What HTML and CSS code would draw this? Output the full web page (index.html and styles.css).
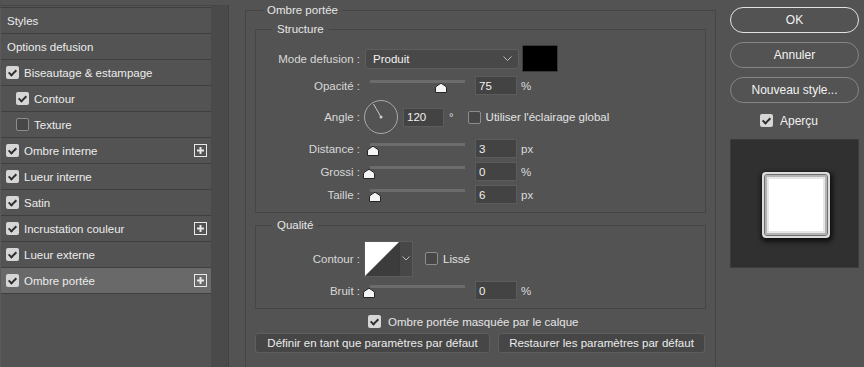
FILE: index.html
```html
<!DOCTYPE html>
<html lang="fr">
<head>
    <meta charset="UTF-8">
    <title>Style de calque</title>
    <link rel="stylesheet" href="styles.css">
</head>
<body>
    <div class="side">
        <ul class="list">
            <li class="item plain">Styles</li>
            <li class="item plain">Options defusion</li>
            <li class="item"><span class="cb on"></span>Biseautage &amp; estampage</li>
            <li class="item sub"><span class="cb on"></span>Contour</li>
            <li class="item sub"><span class="cb"></span>Texture</li>
            <li class="item"><span class="cb on"></span>Ombre interne
                <svg class="add" width="13" height="13"><rect x=".5" y=".5" width="12" height="12" fill="none" stroke="#e8e8e8"/><path d="M6.5 3v7M3 6.5h7" stroke="#e8e8e8" stroke-width="2"/></svg>
            </li>
            <li class="item"><span class="cb on"></span>Lueur interne</li>
            <li class="item"><span class="cb on"></span>Satin</li>
            <li class="item"><span class="cb on"></span>Incrustation couleur
                <svg class="add" width="13" height="13"><rect x=".5" y=".5" width="12" height="12" fill="none" stroke="#e8e8e8"/><path d="M6.5 3v7M3 6.5h7" stroke="#e8e8e8" stroke-width="2"/></svg>
            </li>
            <li class="item"><span class="cb on"></span>Lueur externe</li>
            <li class="item active"><span class="cb on"></span>Ombre portée
                <svg class="add" width="13" height="13"><rect x=".5" y=".5" width="12" height="12" fill="none" stroke="#e8e8e8"/><path d="M6.5 3v7M3 6.5h7" stroke="#e8e8e8" stroke-width="2"/></svg>
            </li>
        </ul>
        <div class="track"></div>
    </div>

    <div class="main">
        <fieldset class="box outer">
            <legend>Ombre portée</legend>

            <fieldset class="box structure">
                <legend>Structure</legend>
                <div class="row mode">
                    <span class="lbl">Mode defusion :</span>
                    <div class="select">Produit
                        <svg width="9" height="6"><path d="M.5 .5l4 4 4-4" fill="none" stroke="#bdbdbd"/></svg>
                    </div>
                    <div class="swatch"></div>
                </div>
                <div class="row">
                    <span class="lbl">Opacité :</span>
                    <div class="slider">
                        <svg class="thumb" style="left: 76px" width="12" height="10"><path d="M.5 9.5V5Q.5 4 1.5 3.2L5 .8Q6 0 7 .8L10.5 3.2Q11.5 4 11.5 5V9.5Z" fill="#f4f4f4" stroke="#262626"/></svg>
                    </div>
                    <input class="num" value="75"><span class="unit">%</span>
                </div>
                <div class="row angle">
                    <span class="lbl">Angle :</span>
                    <svg class="dial" width="34" height="34">
                        <circle cx="17" cy="17" r="16.5" fill="none" stroke="#a9a9a9"/>
                        <path d="M17 17L9.5 4" stroke="#c8c8c8"/>
                        <circle cx="17" cy="17" r="1.5" fill="#d0d0d0"/>
                    </svg>
                    <input class="num" value="120"><span class="unit deg">°</span>
                    <span class="cb global"></span><span class="opt">Utiliser l'éclairage global</span>
                </div>
                <div class="row gap5">
                    <span class="lbl">Distance :</span>
                    <div class="slider">
                        <svg class="thumb" style="left: 8px" width="12" height="10"><path d="M.5 9.5V5Q.5 4 1.5 3.2L5 .8Q6 0 7 .8L10.5 3.2Q11.5 4 11.5 5V9.5Z" fill="#f4f4f4" stroke="#262626"/></svg>
                    </div>
                    <input class="num" value="3"><span class="unit">px</span>
                </div>
                <div class="row">
                    <span class="lbl">Grossi :</span>
                    <div class="slider">
                        <svg class="thumb" style="left: 4px" width="12" height="10"><path d="M.5 9.5V5Q.5 4 1.5 3.2L5 .8Q6 0 7 .8L10.5 3.2Q11.5 4 11.5 5V9.5Z" fill="#f4f4f4" stroke="#262626"/></svg>
                    </div>
                    <input class="num" value="0"><span class="unit">%</span>
                </div>
                <div class="row">
                    <span class="lbl">Taille :</span>
                    <div class="slider">
                        <svg class="thumb" style="left: 10px" width="12" height="10"><path d="M.5 9.5V5Q.5 4 1.5 3.2L5 .8Q6 0 7 .8L10.5 3.2Q11.5 4 11.5 5V9.5Z" fill="#f4f4f4" stroke="#262626"/></svg>
                    </div>
                    <input class="num" value="6"><span class="unit">px</span>
                </div>
            </fieldset>

            <fieldset class="box quality">
                <legend>Qualité</legend>
                <div class="row contour-row">
                    <span class="lbl">Contour :</span>
                    <div class="contour">
                        <svg class="curve" width="34" height="34"><rect width="34" height="34" fill="#3c3c3c"/><path d="M0 0H34L0 34Z" fill="#fff"/></svg>
                        <div class="drop"><svg width="8" height="5"><path d="M.5 .5l3.5 3.5 3.5-3.5" fill="none" stroke="#bdbdbd"/></svg></div>
                    </div>
                    <span class="cb smooth"></span><span class="opt">Lissé</span>
                </div>
                <div class="row gap5">
                    <span class="lbl">Bruit :</span>
                    <div class="slider">
                        <svg class="thumb" style="left: 4px" width="12" height="10"><path d="M.5 9.5V5Q.5 4 1.5 3.2L5 .8Q6 0 7 .8L10.5 3.2Q11.5 4 11.5 5V9.5Z" fill="#f4f4f4" stroke="#262626"/></svg>
                    </div>
                    <input class="num" value="0"><span class="unit">%</span>
                </div>
            </fieldset>

            <div class="mask"><span class="cb on"></span>Ombre portée masquée par le calque</div>
            <div class="actions">
                <button class="btn wide">Définir en tant que paramètres par défaut</button>
                <button class="btn">Restaurer les paramètres par défaut</button>
            </div>
        </fieldset>
    </div>

    <div class="right">
        <button class="pill ok">OK</button>
        <button class="pill">Annuler</button>
        <button class="pill">Nouveau style...</button>
        <div class="preview-check"><span class="cb on"></span>Aperçu</div>
        <div class="preview">
            <div class="shape"><div class="shape-inner"></div></div>
        </div>
    </div>
</body>
</html>
```

FILE: styles.css
```css
body {
    margin: 0;
    height: 367px;
    overflow: hidden;
    display: flex;
    background: #535353;
    color: #e4e4e4;
    font-family: "Liberation Sans", Arial, sans-serif;
    font-size: 11.5px;
}

/* left list */
.side {
    width: 228px;
    margin-top: 5px;
    border-top: 1px solid #474747;
    border-right: 1px solid #424242;
    display: flex;
}
.list {
    width: 210px;
    margin: 1px 0 0;
    padding: 0;
    list-style: none;
    border-top: 1px solid #3f3f3f;
    border-left: 1px solid #5a5a5a;
}
.track {
    flex: 1;
    background: #4a4a4a;
}
.item {
    height: 25px;
    border-bottom: 1px solid #3f3f3f;
    display: flex;
    align-items: center;
    padding-left: 5px;
    color: #ececec;
}
.item .cb {
    margin-right: 5px;
}
.item.plain {
    padding-left: 6px;
}
.item.sub {
    padding-left: 15px;
}
.item.active {
    background: #696969;
}
.add {
    margin-left: auto;
    margin-right: 4px;
}

/* checkboxes */
.cb {
    width: 13px;
    height: 13px;
    box-sizing: border-box;
    border-radius: 2px;
    border: 1px solid #8d8d8d;
    background: #474747;
    display: inline-flex;
    align-items: center;
    justify-content: center;
    flex: none;
}
.cb.on {
    border: none;
    background: #d6d6d6;
}
.cb.on::after {
    content: "";
    width: 3px;
    height: 6px;
    margin-top: -2px;
    border: solid #2e2e2e;
    border-width: 0 2px 2px 0;
    transform: rotate(45deg);
}

/* main panel */
.main {
    width: 471px;
    margin-left: 16px;
    padding-top: 3px;
    display: flex;
    flex-direction: column;
}
.box {
    margin: 0;
    padding: 0;
    min-width: 0;
    border: 1px solid #454545;
}
.box legend {
    line-height: 14px;
    padding: 0 4px;
    color: #e6e6e6;
}
.outer {
    flex: 1;
    border-bottom: none;
    padding: 5px 9px 0;
}
.outer > legend {
    margin-left: 8px;
}
.structure {
    padding: 9px 0 8px;
}
.structure > legend,
.quality > legend {
    margin-left: 16px;
    padding: 0 5px;
}
.quality {
    margin-top: 5px;
    padding: 9px 0 8px;
}

.row {
    display: flex;
    align-items: center;
    height: 19px;
    margin-top: 4px;
}
.row.mode {
    height: 27px;
    margin-top: 0;
}
.row.angle {
    height: 34px;
    margin-top: 5px;
}
.row.gap5 {
    margin-top: 5px;
}
.row.contour-row {
    height: 35px;
    margin-top: 0;
}
.lbl {
    width: 104px;
    padding-right: 5px;
    text-align: right;
    color: #d8d8d8;
    flex: none;
}
.select {
    width: 154px;
    height: 20px;
    box-sizing: border-box;
    border: 1px solid #5e5e5e;
    border-radius: 3px;
    background: #484848;
    color: #f2f2f2;
    padding: 0 6px 0 7px;
    display: flex;
    align-items: center;
    justify-content: space-between;
}
.swatch {
    width: 36px;
    height: 27px;
    box-sizing: border-box;
    margin-left: 3px;
    background: #000;
    border: 1px solid #3a3a3a;
}
.slider {
    position: relative;
    width: 105px;
    height: 19px;
    flex: none;
}
.slider::before {
    content: "";
    position: absolute;
    left: 5px;
    right: 5px;
    top: 4px;
    height: 3px;
    background: #6c6c6c;
}
.thumb {
    position: absolute;
    top: 7px;
    transform: translateX(-50%);
}
.num {
    width: 42px;
    height: 19px;
    box-sizing: border-box;
    margin: 0 0 0 5px;
    padding: 0 3px;
    border: 1px solid #5c5c5c;
    background: #434343;
    color: #f0f0f0;
    font: inherit;
    outline: none;
}
.unit {
    margin-left: 4px;
    color: #dcdcdc;
}
.dial {
    flex: none;
    margin-left: -1px;
}
.angle .num {
    width: 41px;
}
.unit.deg {
    margin-left: 5px;
}
.cb.global {
    margin-left: 14px;
}
.opt {
    margin-left: 5px;
    color: #e4e4e4;
}

.contour {
    display: flex;
    margin-left: -1px;
    border: 1px solid #5c5c5c;
}
.curve {
    display: block;
}
.drop {
    width: 12px;
    background: #474747;
    border-left: 1px solid #3a3a3a;
    display: flex;
    align-items: center;
    justify-content: center;
}
.cb.smooth {
    margin-left: 12px;
}

.mask {
    margin-top: 6px;
    height: 13px;
    padding-left: 113px;
    display: flex;
    align-items: center;
    color: #e6e6e6;
}
.mask .cb {
    margin-right: 7px;
}
.actions {
    display: flex;
    gap: 8px;
    margin-top: 5px;
}
.btn {
    height: 20px;
    width: 207px;
    padding: 0;
    border: 1px solid #5e5e5e;
    border-radius: 3px;
    background: #464646;
    color: #ececec;
    font: inherit;
}
.btn.wide {
    width: 235px;
}

/* right column */
.right {
    width: 129px;
    margin-left: 14px;
    display: flex;
    flex-direction: column;
}
.pill {
    height: 26px;
    margin-top: 9px;
    border: 1px solid #858585;
    border-radius: 13px;
    background: transparent;
    color: #f2f2f2;
    font: inherit;
    font-size: 12px;
}
.pill.ok {
    margin-top: 7px;
    border-color: #e2e2e2;
}
.preview-check {
    margin-top: 11px;
    height: 13px;
    padding-left: 30px;
    display: flex;
    align-items: center;
    font-size: 12px;
    color: #f0f0f0;
}
.preview-check .cb {
    margin-right: 7px;
}
.preview {
    margin-top: 12px;
    height: 129px;
    box-sizing: border-box;
    background: #303030;
    border: 1px solid #3c3c3c;
    padding: 32px 0 0 31px;
}
.shape {
    width: 68px;
    height: 66px;
    box-sizing: border-box;
    padding: 2px;
    border-radius: 4px;
    background: #dcdcdc;
    box-shadow: 1px 2px 4px 2px #121212;
}
.shape-inner {
    height: 100%;
    box-sizing: border-box;
    border: 1px solid #6e6e6e;
    border-radius: 3px;
    background: #fff;
    box-shadow: inset 0 0 0 2px #b4b4b4, inset 0 0 0 4px #e6e6e6;
}
```
